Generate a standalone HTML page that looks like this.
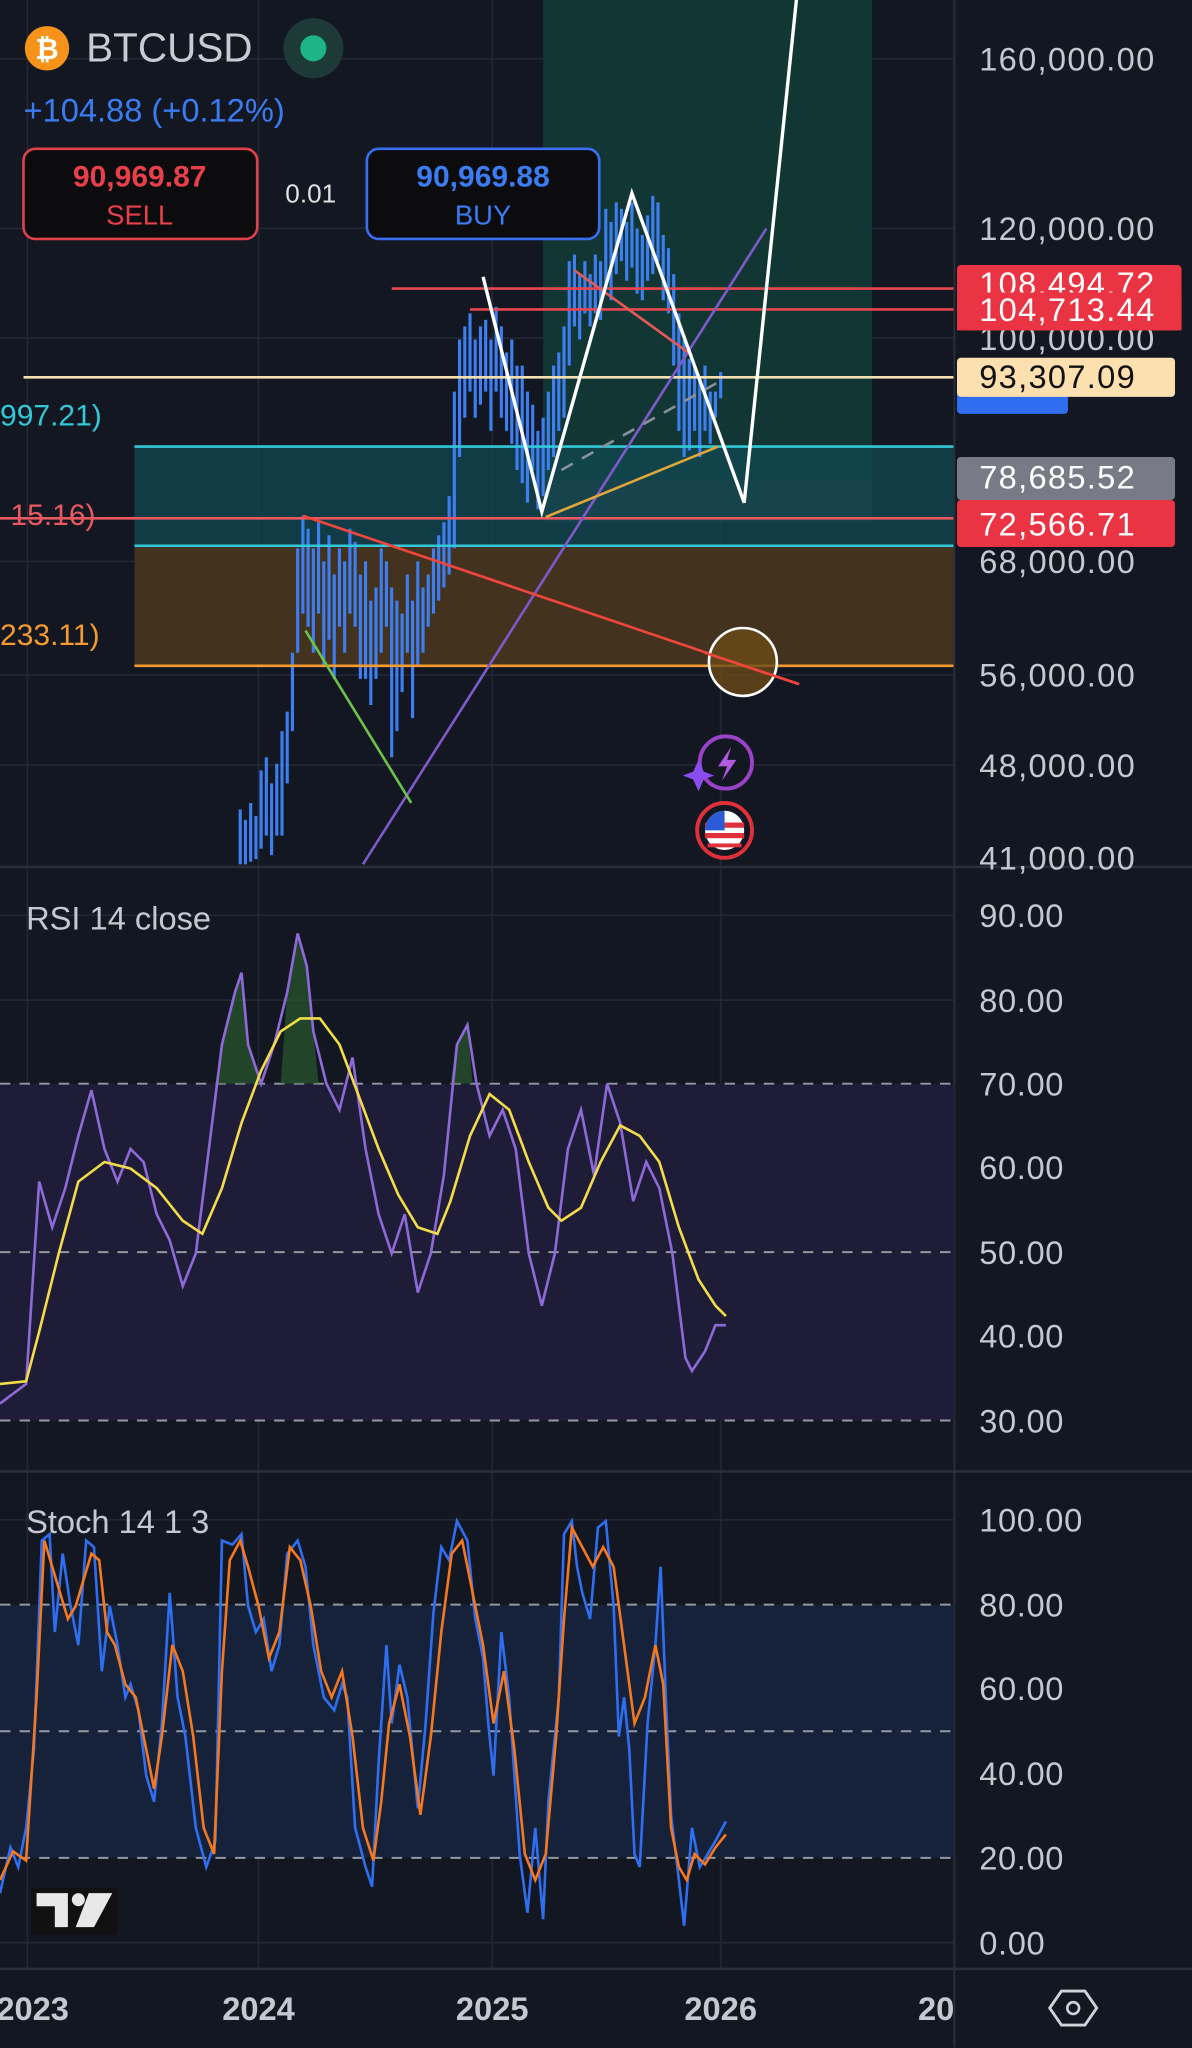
<!DOCTYPE html>
<html><head><meta charset="utf-8"><style>
html,body{margin:0;padding:0;background:#131722;width:1192px;height:2048px;overflow:hidden}
svg{display:block}
text{font-family:"Liberation Sans",sans-serif}
</style></head><body>
<svg width="1192" height="2048" viewBox="0 0 913 1568.6" preserveAspectRatio="none" xmlns="http://www.w3.org/2000/svg">
<rect width="913" height="1569" fill="#131722"/>
<g stroke="#232734" stroke-width="1.3">
<line x1="21" y1="0" x2="21" y2="1508"/><line x1="198" y1="0" x2="198" y2="1508"/><line x1="377" y1="0" x2="377" y2="1508"/><line x1="552" y1="0" x2="552" y2="1508"/>
<line x1="0" y1="45" x2="731" y2="45"/><line x1="0" y1="175" x2="731" y2="175"/><line x1="0" y1="259" x2="731" y2="259"/><line x1="0" y1="430" x2="731" y2="430"/><line x1="0" y1="517" x2="731" y2="517"/><line x1="0" y1="586" x2="731" y2="586"/>
<line x1="0" y1="701" x2="731" y2="701"/><line x1="0" y1="766" x2="731" y2="766"/><line x1="0" y1="894" x2="731" y2="894"/><line x1="0" y1="1023" x2="731" y2="1023"/>
<line x1="0" y1="1164" x2="731" y2="1164"/><line x1="0" y1="1293" x2="731" y2="1293"/><line x1="0" y1="1358" x2="731" y2="1358"/><line x1="0" y1="1488" x2="731" y2="1488"/>
</g>
<rect x="416" y="0" width="252" height="367" fill="#123634"/>
<rect x="416" y="367" width="252" height="33" fill="#2a3140"/>
<rect x="103" y="342" width="628" height="76" fill="#124a52" opacity="0.75"/>
<rect x="103" y="418" width="628" height="92" fill="#43321e"/>
<g stroke="#3d7ef0" stroke-width="2.4" fill="none">
<path d="M184 620V662M188 628V662M192 615V660M196 625V658M200 590V650M204 580V640M208 600V655M212 585V640M216 560V640M220 545V600M224 500V560M228 420V500M232 395V470M236 405V480M240 420V500M244 400V470M248 430V510M252 410V490M256 440V520M260 420V480M264 430V500M268 405V470M272 415V480M276 440V520M280 430V520M284 460V540M288 450V520M292 420V500M296 430V480M300 450V580M304 460V560M308 470V530M312 440V500M316 460V550M320 430V510M324 450V500M328 440V480M332 420V470M336 410V460M340 400V450M344 380V440M348 300V420M352 260V350M356 250V320M360 240V300M364 260V320M368 250V310M372 245V300M376 260V330M380 235V300M384 250V320M388 270V330M392 260V340M396 280V360M400 280V370M404 300V385M408 310V360M412 330V390M416 320V380M420 300V360M424 280V350M428 270V330M432 250V320M436 200V280M440 195V250M444 210V260M448 200V240M452 210V250M456 195V240M460 200V245M464 160V220M468 170V230M472 155V210M476 160V200M480 170V215M484 155V205M488 175V225M492 180V230M496 165V215M500 150V210M504 155V200M508 180V230M512 190V240M516 210V280M520 240V330M524 260V350M528 275V345M532 280V330M536 290V350M540 280V330M544 300V340M548 300V320M552 285V305"/>
</g>
<line x1="300" y1="221" x2="731" y2="221" stroke="#e8474f" stroke-width="2"/>
<line x1="360" y1="237" x2="731" y2="237" stroke="#e8474f" stroke-width="2"/>
<line x1="18" y1="289" x2="731" y2="289" stroke="#f4e0b0" stroke-width="2"/>
<line x1="103" y1="342" x2="731" y2="342" stroke="#33c8d8" stroke-width="2"/>
<line x1="0" y1="397" x2="731" y2="397" stroke="#e8595f" stroke-width="2"/>
<line x1="103" y1="418" x2="731" y2="418" stroke="#33c8d8" stroke-width="2"/>
<line x1="103" y1="510" x2="731" y2="510" stroke="#f59a2e" stroke-width="2"/>
<line x1="278" y1="662" x2="587" y2="175" stroke="#7d59c9" stroke-width="2"/>
<line x1="232" y1="395" x2="612" y2="524" stroke="#f0463c" stroke-width="2"/>
<line x1="440" y1="207" x2="530" y2="272" stroke="#e05a5a" stroke-width="2"/>
<line x1="418" y1="396" x2="550" y2="342" stroke="#e0a83a" stroke-width="2"/>
<line x1="234" y1="483" x2="315" y2="615" stroke="#6cc24a" stroke-width="2"/>
<line x1="430" y1="360" x2="555" y2="290" stroke="#8a8f9c" stroke-width="2" stroke-dasharray="10,8"/>
<polyline points="370,212 415,392 484,148 570,385 610,0" fill="none" stroke="#fff" stroke-width="2.6"/>
<circle cx="569" cy="507" r="26" fill="#6a4a18" fill-opacity="0.8" stroke="#fff" stroke-width="2"/>
<line x1="540" y1="500" x2="612" y2="524" stroke="#f0463c" stroke-width="2"/>
<circle cx="556" cy="584" r="20" fill="#131722" stroke="#9a42c8" stroke-width="3"/>
<path d="M560 572 L550 587 H557 L553 598 L564 582 H557 Z" fill="#b05ae0"/>
<path d="M535 582 L539 591 L547 594 L539 597 L535 606 L531 597 L523 594 L531 591 Z" fill="#8b4df0"/>
<circle cx="555" cy="636" r="21" fill="#131722" stroke="#e0303a" stroke-width="3"/>
<circle cx="555" cy="636" r="15" fill="#fff"/>
<rect x="540" y="630" width="30" height="4" fill="#e0303a"/><rect x="540" y="638" width="30" height="4" fill="#e0303a"/><rect x="542" y="646" width="26" height="3" fill="#e0303a"/>
<path d="M540 636 A15 15 0 0 1 555 621 V636 Z" fill="#2c5bd8"/>
<circle cx="36" cy="37" r="17" fill="#f7931a"/>
<text x="36" y="45" font-size="22" font-weight="bold" fill="#fff" text-anchor="middle">₿</text>
<text x="66" y="47" font-size="31" fill="#c9cbd2">BTCUSD</text>
<circle cx="240" cy="37" r="23" fill="#1d3a38"/><circle cx="240" cy="37" r="10" fill="#1db48a"/>
<text x="18" y="93" font-size="25" fill="#3b7cf2">+104.88 (+0.12%)</text>
<rect x="18" y="114" width="179" height="69" rx="9" fill="#0c0c0e" stroke="#e0404a" stroke-width="2"/>
<text x="107" y="143" font-size="23" font-weight="bold" fill="#e8404a" text-anchor="middle">90,969.87</text>
<text x="107" y="172" font-size="21" fill="#e8404a" text-anchor="middle">SELL</text>
<text x="238" y="155" font-size="20" fill="#e0e0e0" text-anchor="middle">0.01</text>
<rect x="281" y="114" width="178" height="69" rx="9" fill="#0c0c0e" stroke="#3a6ef0" stroke-width="2"/>
<text x="370" y="143" font-size="23" font-weight="bold" fill="#3b7cf2" text-anchor="middle">90,969.88</text>
<text x="370" y="172" font-size="21" fill="#3b7cf2" text-anchor="middle">BUY</text>
<text x="0" y="326" font-size="23" fill="#33c8d8">997.21)</text>
<text x="8" y="402" font-size="23" fill="#e8595f">15.16)</text>
<text x="0" y="494" font-size="23" fill="#f59a2e">233.11)</text>
<line x1="731" y1="0" x2="731" y2="1568" stroke="#2a2e39" stroke-width="1.5"/>
<line x1="0" y1="664" x2="913" y2="664" stroke="#2a2e39" stroke-width="2"/>
<line x1="0" y1="1127" x2="913" y2="1127" stroke="#2a2e39" stroke-width="2"/>
<line x1="0" y1="1508" x2="913" y2="1508" stroke="#2a2e39" stroke-width="2"/>
<g font-size="25" fill="#c5c8d0" letter-spacing="1">
<text x="750" y="54">160,000.00</text><text x="750" y="184">120,000.00</text><text x="750" y="268">100,000.00</text>
<text x="750" y="439">68,000.00</text><text x="750" y="526">56,000.00</text><text x="750" y="595">48,000.00</text><text x="750" y="666">41,000.00</text>
</g>
<rect x="733" y="203" width="172" height="50" rx="3" fill="#ea3443"/>
<text x="750" y="226" font-size="25" fill="#fff" letter-spacing="1">108,494.72</text>
<rect x="733" y="224" width="172" height="29" fill="#ea3443"/>
<text x="750" y="246" font-size="25" fill="#fff" letter-spacing="1">104,713.44</text>
<rect x="733" y="300" width="85" height="17" rx="3" fill="#2f6ef0"/>
<rect x="733" y="274" width="167" height="30" rx="3" fill="#fde0b0"/>
<text x="750" y="297" font-size="25" fill="#111" letter-spacing="1">93,307.09</text>
<rect x="733" y="350" width="167" height="33" rx="3" fill="#787b86"/>
<text x="750" y="374" font-size="25" fill="#fff" letter-spacing="1">78,685.52</text>
<rect x="733" y="383" width="167" height="36" rx="3" fill="#ea3443"/>
<text x="750" y="410" font-size="25" fill="#fff" letter-spacing="1">72,566.71</text>
<rect x="0" y="830" width="731" height="258" fill="#1e1c36"/>
<g stroke="#9598a1" stroke-width="1.5" stroke-dasharray="8,7"><line x1="0" y1="830" x2="731" y2="830"/><line x1="0" y1="959" x2="731" y2="959"/><line x1="0" y1="1088" x2="731" y2="1088"/></g>
<path d="M165 830 L170 800 L180 760 L185 745 L190 800 L200 830 Z M215 830 L220 760 L228 715 L235 740 L240 790 L244 830 Z M345 830 L350 800 L358 785 L362 830Z" fill="#2a5a2e" opacity="0.7"/>
<polyline fill="none" stroke="#8e6ad8" stroke-width="2" points="0,1075 20,1060 30,905 40,940 50,910 60,870 70,835 80,880 90,905 100,880 110,890 120,930 130,950 140,985 150,960 160,880 170,800 180,760 185,745 190,800 200,830 210,800 220,760 228,715 235,740 240,790 250,830 260,850 270,810 280,880 290,930 300,960 310,930 320,990 330,960 340,900 350,800 358,785 365,830 375,870 385,850 395,880 405,960 415,1000 425,960 435,880 445,850 455,900 465,830 475,860 485,920 495,890 505,910 515,960 525,1040 530,1050 540,1035 548,1015 556,1015"/>
<polyline fill="none" stroke="#f3dc4a" stroke-width="2" points="0,1060 20,1058 30,1020 45,960 60,905 80,890 100,895 120,910 140,935 155,945 170,910 185,860 200,820 215,790 230,780 245,780 260,800 275,840 290,880 305,915 320,940 335,945 345,920 360,870 375,838 390,850 405,890 420,925 430,935 445,925 460,890 475,862 490,870 505,890 520,940 535,980 548,1000 556,1008"/>
<text x="20" y="712" font-size="25" fill="#c5c8d0">RSI 14 close</text>
<g font-size="25" fill="#c5c8d0" letter-spacing="0.5"><text x="750" y="710">90.00</text><text x="750" y="775">80.00</text><text x="750" y="839">70.00</text><text x="750" y="903">60.00</text><text x="750" y="968">50.00</text><text x="750" y="1032">40.00</text><text x="750" y="1097">30.00</text></g>
<rect x="0" y="1229" width="731" height="194" fill="#15223a"/>
<g stroke="#9598a1" stroke-width="1.5" stroke-dasharray="8,7"><line x1="0" y1="1229" x2="731" y2="1229"/><line x1="0" y1="1326" x2="731" y2="1326"/><line x1="0" y1="1423" x2="731" y2="1423"/></g>
<polyline fill="none" stroke="#2f6ef0" stroke-width="2" points="0,1450 8,1415 14,1430 20,1400 26,1340 32,1180 38,1175 42,1250 48,1190 54,1230 60,1260 66,1180 72,1185 78,1280 84,1230 90,1260 96,1300 100,1290 106,1310 112,1360 118,1380 124,1320 130,1220 136,1300 142,1330 150,1400 158,1430 165,1410 170,1180 178,1183 185,1175 190,1230 196,1250 202,1240 208,1280 214,1260 220,1190 228,1180 234,1200 240,1260 248,1300 256,1310 262,1290 266,1300 272,1400 280,1430 285,1445 290,1350 296,1260 300,1320 306,1275 312,1300 320,1385 326,1320 332,1235 338,1185 344,1195 350,1165 358,1180 364,1240 370,1270 374,1320 378,1360 384,1250 390,1300 398,1420 404,1465 410,1400 416,1470 420,1380 428,1300 432,1175 438,1165 442,1200 446,1220 452,1240 458,1170 464,1165 470,1230 474,1330 478,1300 482,1340 486,1420 490,1430 496,1320 502,1260 506,1200 510,1300 514,1390 520,1440 524,1475 530,1400 536,1430 542,1420 548,1410 556,1395"/>
<polyline fill="none" stroke="#f5781f" stroke-width="2" points="0,1440 10,1418 20,1425 28,1300 34,1180 40,1200 46,1220 52,1240 58,1230 64,1210 70,1190 76,1195 82,1250 88,1260 96,1290 104,1300 112,1340 118,1370 124,1330 132,1260 140,1280 148,1330 156,1400 164,1420 170,1280 176,1195 184,1180 190,1200 198,1230 206,1270 214,1250 222,1185 230,1195 238,1230 246,1280 254,1300 262,1280 270,1330 278,1400 286,1425 292,1380 298,1320 306,1290 314,1330 322,1390 330,1330 338,1250 346,1190 354,1180 362,1220 370,1260 378,1320 386,1280 394,1340 402,1420 410,1440 418,1420 426,1330 432,1240 438,1170 446,1185 454,1200 462,1185 470,1200 478,1260 486,1320 494,1300 502,1260 508,1290 514,1400 520,1430 526,1440 532,1420 540,1428 548,1415 556,1405"/>
<text x="20" y="1174" font-size="25" fill="#c5c8d0">Stoch 14 1 3</text>
<g font-size="25" fill="#c5c8d0" letter-spacing="0.5"><text x="750" y="1173">100.00</text><text x="750" y="1238">80.00</text><text x="750" y="1302">60.00</text><text x="750" y="1367">40.00</text><text x="750" y="1432">20.00</text><text x="750" y="1497">0.00</text></g>
<rect x="24" y="1446" width="66" height="36" fill="#111"/>
<path d="M28 1450 H52 V1476 H42 V1460 H28 Z" fill="#e8e8e8"/>
<circle cx="60" cy="1455" r="5" fill="#e8e8e8"/>
<path d="M68 1450 H86 L72 1476 H58 Z" fill="#e8e8e8"/>
<g font-size="25" font-weight="bold" fill="#c5c8d0" text-anchor="middle"><text x="25" y="1547">2023</text><text x="198" y="1547">2024</text><text x="377" y="1547">2025</text><text x="552" y="1547">2026</text><text x="724" y="1547">202</text></g>
<rect x="731" y="1510" width="182" height="59" fill="#131722"/>
<line x1="731" y1="1508" x2="731" y2="1568" stroke="#2a2e39" stroke-width="1.5"/>
<polygon points="813,1525 831,1525 840,1538 831,1551 813,1551 804,1538" fill="none" stroke="#d0d3da" stroke-width="2.2"/>
<circle cx="822" cy="1538" r="4.5" fill="none" stroke="#d0d3da" stroke-width="2"/>
</svg>
</body></html>
